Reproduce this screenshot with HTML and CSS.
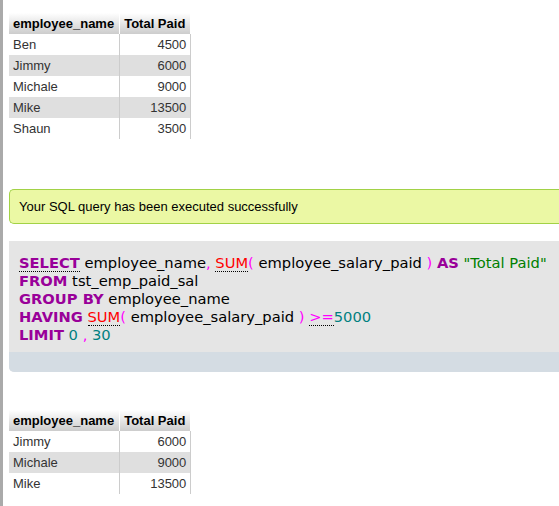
FILE: index.html
```html
<!DOCTYPE html>
<html>
<head>
<meta charset="UTF-8">
<title>SQL result</title>
<link rel="stylesheet" href="styles.css">
</head>
<body>
<div class="page">

<table class="data">
<thead>
<tr><th>employee_name</th><th>Total Paid</th></tr>
</thead>
<tbody>
<tr class="odd"><td>Ben</td><td class="num">4500</td></tr>
<tr class="even"><td>Jimmy</td><td class="num">6000</td></tr>
<tr class="odd"><td>Michale</td><td class="num">9000</td></tr>
<tr class="even"><td>Mike</td><td class="num">13500</td></tr>
<tr class="odd"><td>Shaun</td><td class="num">3500</td></tr>
</tbody>
</table>

<div class="success">Your SQL query has been executed successfully</div>

<div class="result_query">
  <div class="sqlOuter">
    <code class="sql"><span class="kw dot">SELECT</span> employee_name<span class="punct">,</span> <span class="fn dot">SUM</span><span class="punct">(</span> employee_salary_paid <span class="punct">)</span> <span class="kw">AS</span> <span class="quote">"Total Paid"</span><br>
<span class="kw">FROM</span> tst_emp_paid_sal<br>
<span class="kw">GROUP BY</span> employee_name<br>
<span class="kw">HAVING</span> <span class="fn dot">SUM</span><span class="punct">(</span> employee_salary_paid <span class="punct">)</span> <span class="punct dot">&gt;=</span><span class="digit">5000</span><br>
<span class="kw">LIMIT</span> <span class="digit">0</span> <span class="punct">,</span> <span class="digit">30</span></code>
  </div>
  <div class="tools"></div>
</div>

<table class="data">
<thead>
<tr><th>employee_name</th><th>Total Paid</th></tr>
</thead>
<tbody>
<tr class="odd"><td>Jimmy</td><td class="num">6000</td></tr>
<tr class="even"><td>Michale</td><td class="num">9000</td></tr>
<tr class="odd"><td>Mike</td><td class="num">13500</td></tr>
</tbody>
</table>

</div>
</body>
</html>
```

FILE: styles.css
```css
html, body {
  margin:0;
  padding:0;
  overflow:hidden;
  background:#fff;
}
body {
  font-family:"Liberation Sans", Arial, sans-serif;
  font-size:13px;
  color:#333;
}
.page {
  border-left:3px solid #aaa;
  padding:13px 0 0 6px;
  min-height:100vh;
  box-sizing:border-box;
}

/* result tables */
table.data {
  border-collapse:collapse;
  margin-bottom:50px;
}
table.data th, table.data td {
  line-height:15px;
  padding:3px 5px 3px 4px;
  text-align:left;
  white-space:nowrap;
}
table.data th {
  font-weight:bold;
  color:#000;
  background:linear-gradient(#fff, #ccc);
  border-right:1px solid #fff;
}
table.data td {
  border-right:1px solid #ccc;
}
table.data td.num {
  text-align:right;
  padding-right:4px;
}
tr.odd { background:#fff; }
tr.even { background:#dfdfdf; }

/* message: runs off the right edge of the frame */
.success {
  background:#ebf8a4;
  border:1px solid #a2d246;
  border-right:none;
  border-radius:5px 0 0 5px;
  padding:9px 9px;
  line-height:15px;
  color:#000;
  margin-bottom:17px;
}

/* query box */
.result_query {
  background:#e5e5e5;
  border-radius:0 0 0 5px;
  overflow:hidden;
  margin-bottom:38px;
}
.sqlOuter {
  padding:13px 10px 8px;
}
code.sql {
  display:block;
  font-family:"DejaVu Sans", Verdana, sans-serif;
  font-size:14.7px;
  line-height:18px;
  color:#000;
  white-space:nowrap;
  overflow:hidden;
}
.kw { color:#990099; font-weight:bold; }
.fn { color:#ff0000; }
.punct { color:#ff00ff; }
.digit { color:#008080; }
.quote { color:#008000; }
.dot { border-bottom:1px dotted #000; }
.tools {
  height:20px;
  background:#d4dce3;
}
```
